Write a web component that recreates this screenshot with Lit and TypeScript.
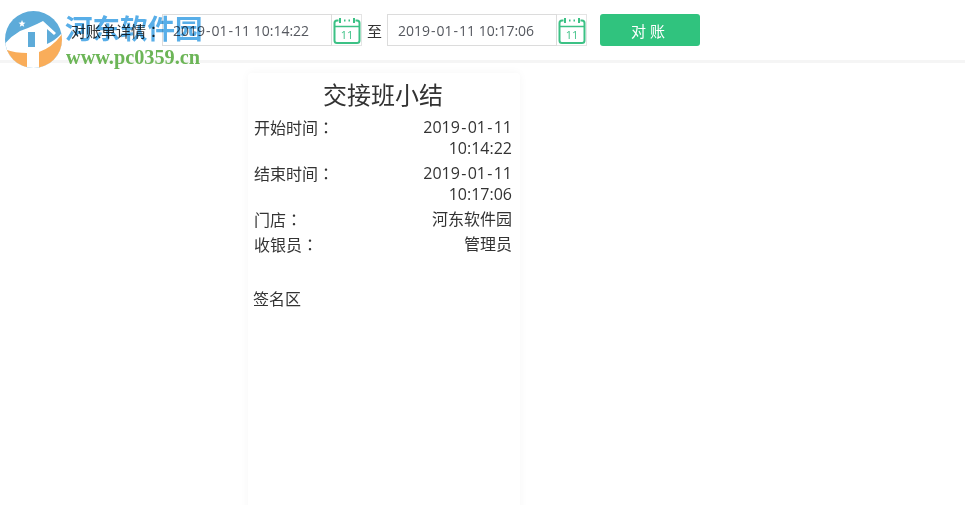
import { LitElement, html, css } from "lit";
import { customElement } from "lit/decorators.js";

const calendar = html`<svg class="cal" viewBox="0 0 30 30" width="30" height="30" fill="none" stroke="#3cc185">
  <path d="M6.500 5.500H5Q2.500 5.500 2.500 8V25.500Q2.500 28 5 28H25Q27.500 28 27.500 25.500V8Q27.500 5.500 25 5.500H23.500" stroke-width="2"/>
  <path d="M2.500 11.500H27.500" stroke-width="1.500"/>
  <path d="M8 3V8M22 3V8M12 5.500H13.500M16.500 5.500H18" stroke-width="2"/>
  <text x="15" y="24" text-anchor="middle" fill="#3cc185" stroke="none" font-size="11" font-family="Open Sans, Liberation Sans, sans-serif">11</text>
</svg>`;

const dated = (s: string) => {
  const parts = s.split("-");
  return parts.map((p, i) => (i === 0 ? p : html`<span class="hy">-</span>${p}`));
};
const colon = html`<span class="colon">：</span>`;

@customElement("app-root")
export class AppRoot extends LitElement {
  static styles = css`
    :host {
      display: block;
      position: relative;
      height: 505px;
      overflow: hidden;
      background: #fff;
      color: #333;
      font-family: "Open Sans", "Noto Sans CJK SC", sans-serif;
    }
    .bar {
      display: flex;
      align-items: center;
      height: 60px;
      padding: 0 0 0 71px;
      border-bottom: 3px solid #f5f5f5;
    }
    .label {
      width: 91px;
      font-size: 15px;
      color: #333;
      white-space: nowrap;
    }
    .field {
      display: flex;
      align-items: center;
      height: 32px;
      box-sizing: border-box;
      width: 170px;
      padding-left: 10px;
      border: 1px solid #dcdcdc;
      font-size: 14px;
      color: #55585f;
      white-space: pre;
    }
    .field .hy { padding: 0 1px; }
    .icon {
      display: flex;
      align-items: center;
      justify-content: center;
      width: 30px;
      height: 32px;
      box-sizing: border-box;
      border: 1px solid #e4e4e4;
      border-left: 0;
    }
    .cal { display: block; flex: none; }
    .to {
      width: 25px;
      padding-left: 5px;
      box-sizing: border-box;
      font-size: 15px;
      color: #333;
    }
    .btn {
      display: flex;
      align-items: center;
      justify-content: center;
      width: 100px;
      height: 32px;
      margin-left: 13px;
      border-radius: 3px;
      background: #30c37e;
      color: #fff;
      font-size: 15px;
      letter-spacing: 4px;
    }
    .card {
      width: 272px;
      height: 460px;
      box-sizing: border-box;
      margin: 10px 0 0 248px;
      border-radius: 4px;
      box-shadow: 0 0 10px rgba(0, 0, 0, 0.04);
      padding: 5px 8px 0 6px;
      font-size: 16px;
      color: #333;
    }
    .title {
      font-size: 24px;
      line-height: 34px;
      text-align: center;
    }
    .row {
      display: flex;
      justify-content: space-between;
      line-height: 21px;
      margin-bottom: 4px;
    }
    .row.first { margin-top: 5px; }
    .row.last { margin-top: -1px; }
    .key { flex: none; }
    .colon { font-family: "Noto Sans CJK TC", sans-serif; }
    .val {
      width: 100px;
      text-align: right;
    }
    .val .hy { padding: 0 1.300px; }
    .sign {
      margin: 31px 0 0 -1px;
      line-height: 24px;
    }
    .mark {
      position: absolute;
      left: 0;
      top: 0;
      width: 210px;
      height: 72px;
    }
    .logo {
      position: absolute;
      left: 0;
      top: 0;
    }
    .mark-cn {
      position: absolute;
      left: 65px;
      top: 10px;
      font: 700 27.500px/40px "Liberation Serif", "Noto Sans CJK SC", serif;
      color: #58aee8;
      white-space: nowrap;
      mix-blend-mode: multiply;
    }
    .mark-en {
      position: absolute;
      left: 66px;
      top: 46px;
      font: 700 20.300px/22px "Liberation Serif", serif;
      color: #6cb557;
      white-space: nowrap;
    }
  `;

  render() {
    return html`
      <div class="bar">
        <div class="label">对账单详情${colon}</div>
        <div class="field">${dated("2019-01-11 10:14:22")}</div>
        <div class="icon">${calendar}</div>
        <div class="to">至</div>
        <div class="field">${dated("2019-01-11 10:17:06")}</div>
        <div class="icon">${calendar}</div>
        <div class="btn">对账</div>
      </div>
      <div class="card">
        <div class="title">交接班小结</div>
        <div class="row first"><span class="key">开始时间${colon}</span><span class="val">${dated("2019-01-11 10:14:22")}</span></div>
        <div class="row"><span class="key">结束时间${colon}</span><span class="val">${dated("2019-01-11 10:17:06")}</span></div>
        <div class="row"><span class="key">门店${colon}</span><span class="val">河东软件园</span></div>
        <div class="row last"><span class="key">收银员${colon}</span><span class="val">管理员</span></div>
        <div class="sign">签名区</div>
      </div>
      <div class="mark">
        <svg class="logo" width="66" height="70" viewBox="0 0 66 70">
          <defs><clipPath id="disc"><circle cx="33.500" cy="39.500" r="28.500"/></clipPath></defs>
          <g clip-path="url(#disc)">
            <rect x="0" y="8" width="66" height="62" fill="#5dabd9"/>
            <path d="M0 50Q8 38 20 31L28 28 37 24 43 21 56 33 54 35 47 29V44Q55 41 63 32V70H0Z" fill="#fff"/>
            <path d="M28 32H35V47H28Z" fill="#5dabd9"/>
            <path d="M2 48Q14 53 27 53V70H2ZM39 52Q52 48 63 33V70H39Z" fill="#f9ad5a"/>
            <path d="M22 20l1 2.500 2.500.2-2 1.600.7 2.500-2.200-1.400-2.200 1.400.7-2.500-2-1.600 2.500-.2Z" fill="#fff"/>
          </g>
        </svg>
        <div class="mark-cn">河东软件园</div>
        <div class="mark-en">www.pc0359.cn</div>
      </div>
    `;
  }
}
